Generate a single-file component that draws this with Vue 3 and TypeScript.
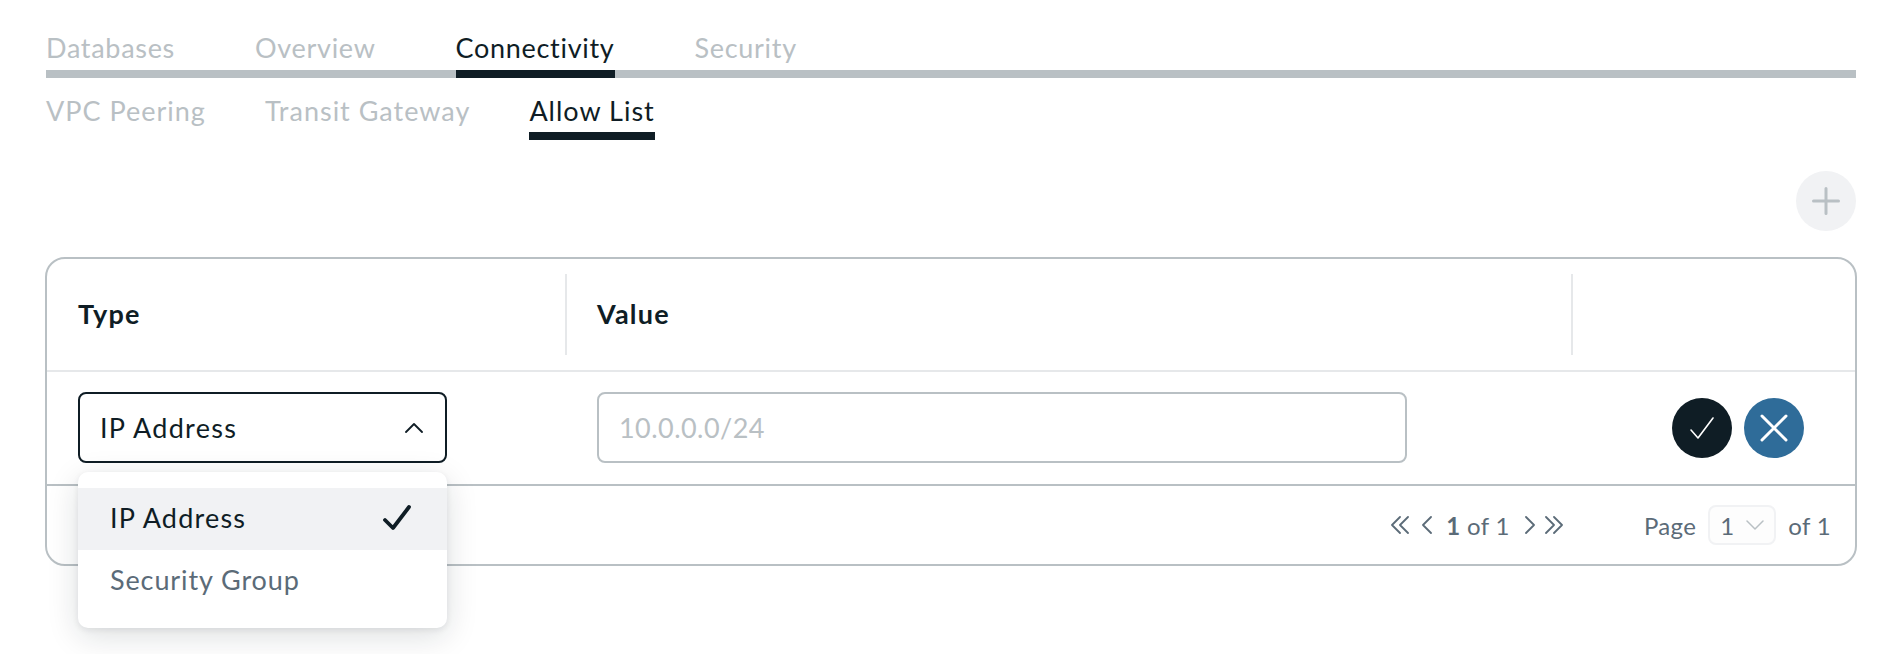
<template>
  <main class="page">
    <nav class="tabs main-tabs">
      <a v-for="t in mainTabs" :key="t" class="tab" :class="{ active: t === 'Connectivity' }">{{ t }}</a>
    </nav>
    <nav class="tabs sub-tabs">
      <a v-for="t in subTabs" :key="t" class="tab" :class="{ active: t === 'Allow List' }">{{ t }}</a>
    </nav>

    <div class="toolbar">
      <button class="round add" aria-label="Add">
        <svg width="28" height="28" viewBox="0 0 28 28" fill="none" stroke="currentColor" stroke-width="3" stroke-linecap="round">
          <path d="M14 1.5v25M1.5 14h25" />
        </svg>
      </button>
    </div>

    <section class="table">
      <div class="row head">
        <div class="cell">Type</div>
        <div class="cell">Value</div>
        <div class="cell"></div>
      </div>
      <div class="row body">
        <div class="cell">
          <div class="select">
            <span>IP Address</span>
            <svg width="18" height="11" viewBox="0 0 18 11" fill="none" stroke="currentColor" stroke-width="1.8" stroke-linecap="round" stroke-linejoin="round">
              <path d="M1 10l8-8 8 8" />
            </svg>
          </div>
          <ul class="menu">
            <li class="option selected">
              IP Address
              <svg width="28" height="26" viewBox="0 0 28 26" fill="none" stroke="currentColor" stroke-width="3.8" stroke-linecap="round" stroke-linejoin="round">
                <path d="M2 15l8 8L26 2" />
              </svg>
            </li>
            <li class="option">Security Group</li>
          </ul>
        </div>
        <div class="cell value-cell">
          <input class="value-input" placeholder="10.0.0.0/24" />
        </div>
        <div class="cell actions">
          <button class="round confirm" aria-label="Save">
            <svg width="26" height="24" viewBox="0 0 26 24" fill="none" stroke="currentColor" stroke-width="1.6" stroke-linecap="round" stroke-linejoin="round">
              <path d="M2 14l7 8L24 2" />
            </svg>
          </button>
          <button class="round cancel" aria-label="Cancel">
            <svg width="28" height="28" viewBox="0 0 28 28" fill="none" stroke="currentColor" stroke-width="3" stroke-linecap="round">
              <path d="M2 2l24 24M26 2L2 26" />
            </svg>
          </button>
        </div>
      </div>
      <footer class="foot">
        <div class="pager">
          <svg class="ic" width="18" height="18" viewBox="0 0 18 18"><path d="M9 1L1 9l8 8M17 1L9 9l8 8" /></svg>
          <svg class="ic prev" width="10" height="18" viewBox="0 0 10 18"><path d="M9 1L1 9l8 8" /></svg>
          <span class="count"><b>1</b> of 1</span>
          <svg class="ic next" width="10" height="18" viewBox="0 0 10 18"><path d="M1 1l8 8-8 8" /></svg>
          <svg class="ic" width="18" height="18" viewBox="0 0 18 18"><path d="M1 1l8 8-8 8M9 1l8 8-8 8" /></svg>
        </div>
        <div class="page-jump">
          <span>Page</span>
          <div class="page-select">
            <span>1</span>
            <svg width="18" height="10" viewBox="0 0 18 10" fill="none" stroke="currentColor" stroke-width="1.5" stroke-linecap="round" stroke-linejoin="round">
              <path d="M1 1l8 8 8-8" />
            </svg>
          </div>
          <span>of 1</span>
        </div>
      </footer>
    </section>
  </main>
</template>

<script setup lang="ts">
const mainTabs: string[] = ['Databases', 'Overview', 'Connectivity', 'Security']
const subTabs: string[] = ['VPC Peering', 'Transit Gateway', 'Allow List']
</script>

<style scoped>
.page {
  min-height: 100vh;
  padding: 30px 38px 0 46px;
  box-sizing: border-box;
  color: #0f1d25;
  font-family: Lato, "Open Sans", sans-serif;
  font-size: 27px;
  letter-spacing: 0.7px;
  font-variant-ligatures: none;
}

.tabs {
  display: flex;
}

.main-tabs {
  gap: 80px;
  height: 40px;
  border-bottom: 8px solid #b9c0c4;
}

.sub-tabs {
  gap: 59px;
  height: 62px;
  letter-spacing: 1px;
}

.tab {
  display: block;
  line-height: 36px;
  color: #b9c0c4;
  border-bottom: 8px solid transparent;
}

.main-tabs .tab {
  height: 40px;
}

.sub-tabs .tab {
  height: 39px;
  padding-top: 15px;
}

.tab.active {
  color: #0f1d25;
  border-bottom-color: #0f1d25;
}

.toolbar {
  display: flex;
  justify-content: flex-end;
  padding: 31px 0 26px;
}

.round {
  display: flex;
  align-items: center;
  justify-content: center;
  width: 60px;
  height: 60px;
  padding: 0;
  border: none;
  border-radius: 50%;
}

.add {
  background: #f1f2f4;
  color: #b9c0c4;
}

.table {
  height: 309px;
  margin: 0 -1px;
  border: 2px solid #b9c0c4;
  border-radius: 20px;
  background: #fff;
  box-sizing: border-box;
}

.row {
  display: grid;
  grid-template-columns: 518px 1006px 1fr;
}

.head {
  height: 113px;
  padding: 15px 0;
  box-sizing: border-box;
  border-bottom: 2px solid #e6e8ea;
  font-weight: 700;
  letter-spacing: 1.2px;
}

.head .cell {
  display: flex;
  align-items: center;
  padding: 0 0 2px 31px;
}

.head .cell:not(:first-child) {
  border-left: 2px solid #e6e8ea;
  padding-left: 30px;
}

.body {
  height: 114px;
  padding-bottom: 1px;
  border-bottom: 2px solid #b9c0c4;
  box-sizing: border-box;
}

.body .cell {
  position: relative;
  display: flex;
  align-items: center;
  padding-left: 31px;
}

.body .value-cell {
  padding-left: 32px;
}

.select {
  display: flex;
  align-items: center;
  justify-content: space-between;
  width: 369px;
  height: 71px;
  padding: 0 22px 0 20px;
  box-sizing: border-box;
  border: 2px solid #0f1d25;
  border-radius: 8px;
  letter-spacing: 1.3px;
}

.menu {
  position: absolute;
  top: 100px;
  left: 31px;
  z-index: 2;
  width: 369px;
  height: 156px;
  margin: 0;
  padding: 16px 0;
  box-sizing: border-box;
  list-style: none;
  background: #fff;
  border-radius: 10px;
  box-shadow: 0 8px 32px rgba(15, 29, 37, 0.14), 0 2px 6px rgba(15, 29, 37, 0.08);
  letter-spacing: 0.9px;
}

.option {
  display: flex;
  align-items: center;
  justify-content: space-between;
  height: 62px;
  padding: 0 36px 3px 32px;
  box-sizing: border-box;
  color: #5b6b78;
}

.option.selected {
  background: #f1f2f4;
  color: #0f1d25;
  letter-spacing: 1.2px;
}

.value-input {
  width: 810px;
  height: 71px;
  padding: 0 20px;
  box-sizing: border-box;
  border: 2px solid #b9c0c4;
  border-radius: 8px;
  outline: none;
  font: inherit;
  letter-spacing: 0.45px;
}

.value-input::placeholder {
  color: #b9c0c4;
}

.body .actions {
  justify-content: flex-end;
  gap: 12px;
  padding-right: 51px;
}

.confirm {
  background: #0f1d25;
  color: #fff;
}

.cancel {
  background: #2f6c99;
  color: #fff;
}

.foot {
  display: flex;
  justify-content: flex-end;
  align-items: center;
  height: 78px;
  padding-right: 24px;
  color: #5b6b78;
  font-size: 24px;
  letter-spacing: 0.35px;
}

.pager {
  display: flex;
  align-items: center;
  margin-right: 81px;
}

.ic {
  fill: none;
  stroke: #5b6b78;
  stroke-width: 1.8;
  stroke-linecap: round;
  stroke-linejoin: round;
}

.prev {
  margin: 0 14px 0 13px;
}

.next {
  margin: 0 10px 0 15px;
}

.count b {
  font-weight: 700;
}

.page-jump {
  display: flex;
  align-items: center;
  gap: 12px;
}

.page-select {
  display: flex;
  align-items: center;
  justify-content: space-between;
  width: 68px;
  height: 40px;
  padding: 0 10px;
  box-sizing: border-box;
  background: #fdfdfd;
  border: 2px solid #f1f2f4;
  border-radius: 8px;
}

.page-select svg {
  color: #b9c0c4;
}
</style>

<style>
body {
  background: #fff;
}
</style>
